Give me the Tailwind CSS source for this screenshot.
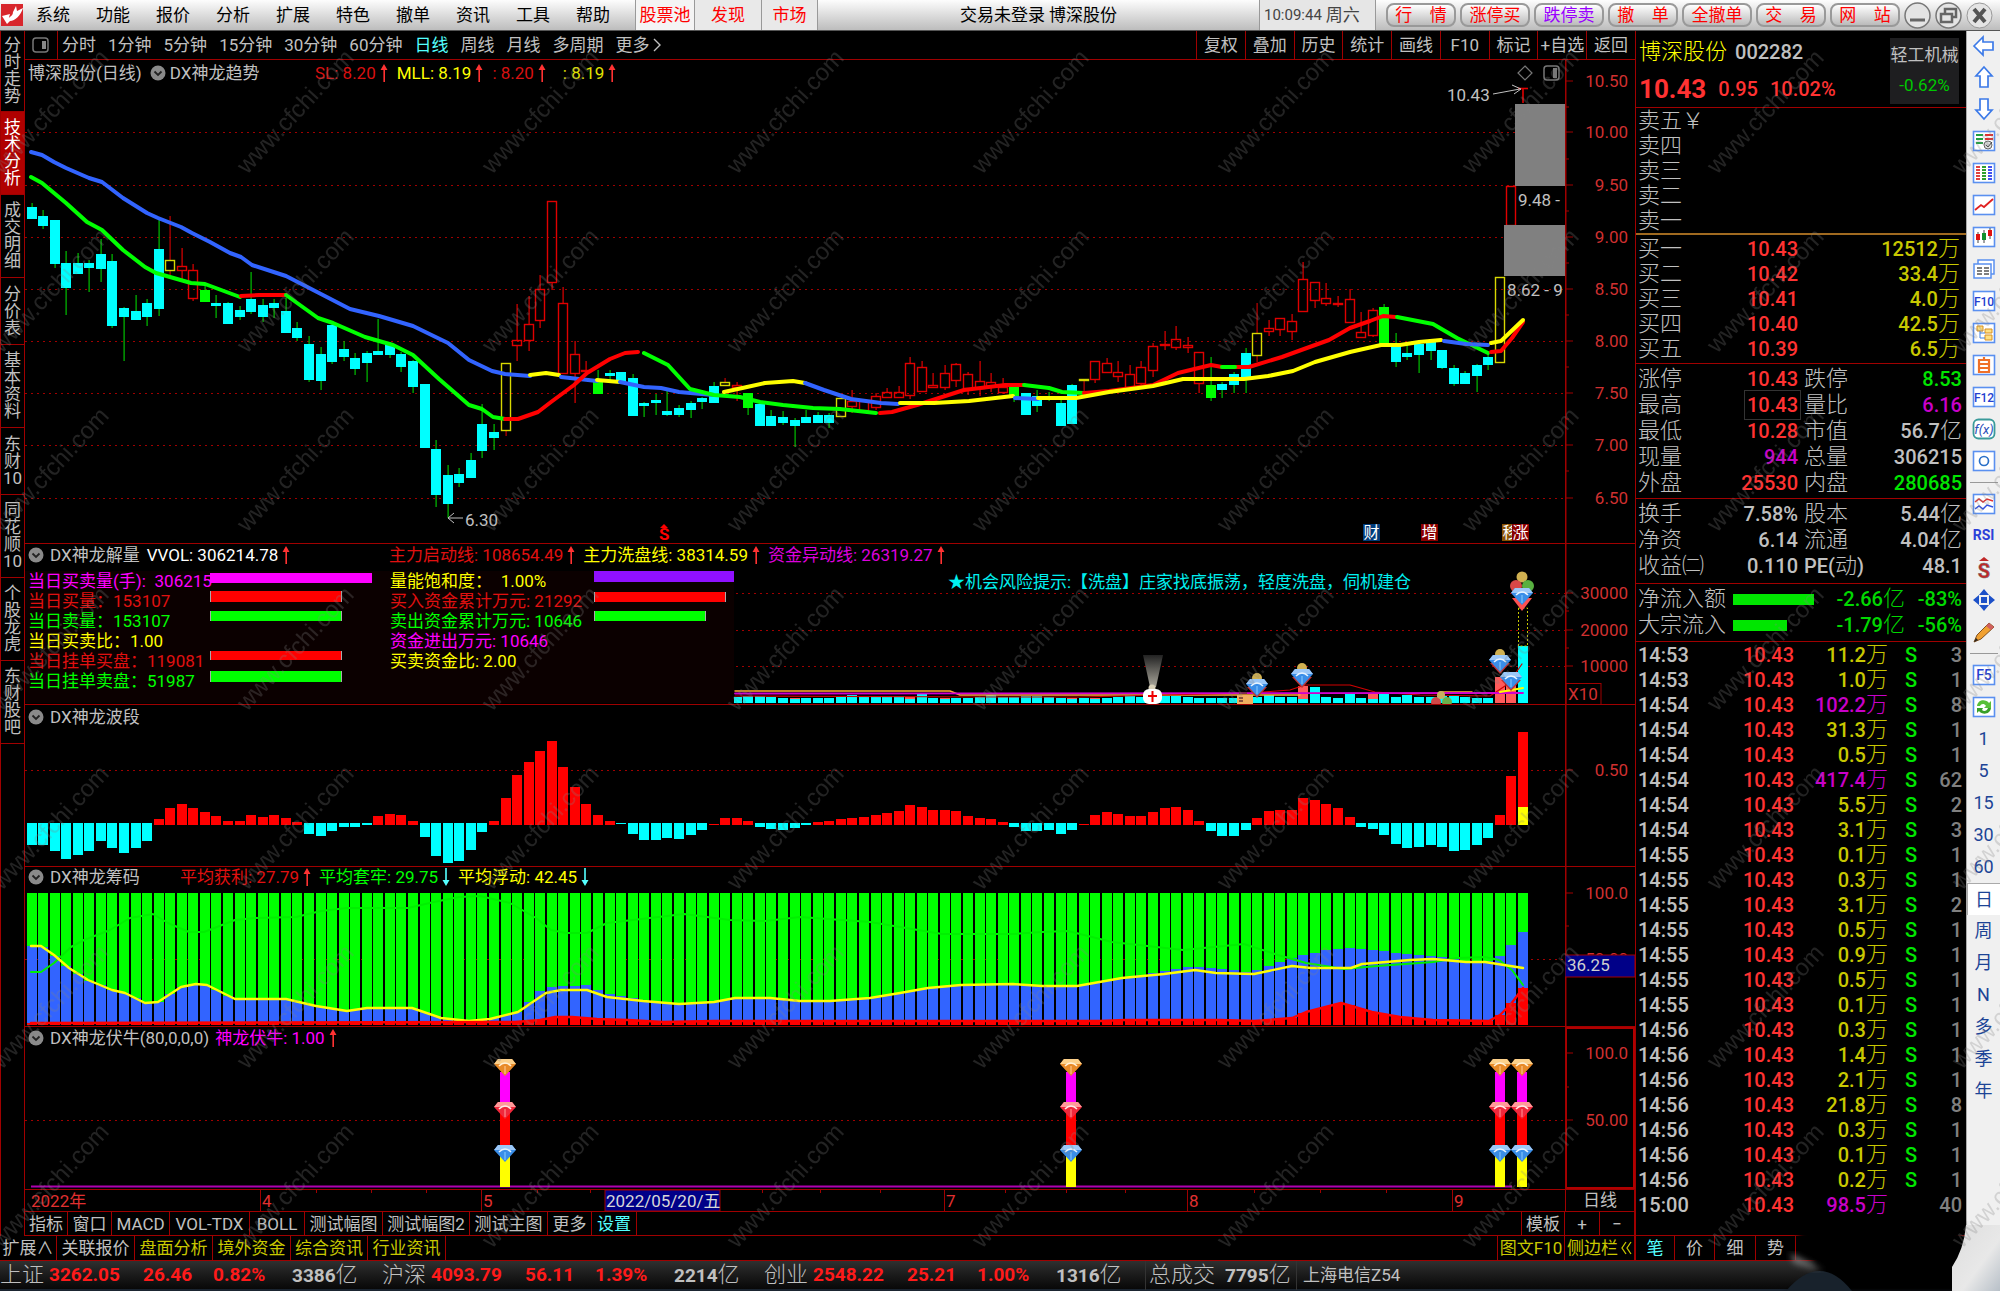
<!DOCTYPE html>
<html lang="zh-CN">
<head>
<meta charset="utf-8">
<title>交易未登录 博深股份</title>
<script src="https://cdn.jsdelivr.net/npm/@tailwindcss/browser@4"></script>
</head>
<body class="relative overflow-x-hidden bg-black font-['Roboto','Noto_Sans_CJK_SC',sans-serif] text-[17px] leading-5 text-[#c0c0c0]">

<svg class="absolute h-0 w-0" aria-hidden="true">
  <defs>
    <symbol id="chev" viewBox="0 0 16 16"><circle cx="8" cy="8" r="7.5" fill="#8a8a8a"/><path d="M4.5 6.5 8 10l3.5-3.5" fill="none" stroke="#222" stroke-width="1.8"/></symbol>
    <symbol id="up" viewBox="0 0 8 18"><path d="M4 0 7.500 6H5v12H3.400V6H.5z" fill="#ff3232"/></symbol>
    <symbol id="down" viewBox="0 0 8 18"><path d="M4 18 .5 12H3.200V0H4.800v12H7.500z" fill="#54ffff"/></symbol>
    <symbol id="gemB" viewBox="0 0 22 17"><path d="M4 0h14l4 5-11 12L0 5z" fill="#3a8ee8"/><path d="M4 0h14l4 5H0z" fill="#9cc8f8"/><path d="M5 7Q11 1 17 7" fill="none" stroke="#e8f4ff" stroke-width="1.600"/><path d="M11 7v8" stroke="#8cf" /></symbol>
    <symbol id="gemR" viewBox="0 0 22 17"><path d="M4 0h14l4 5-11 12L0 5z" fill="#f0283c"/><path d="M4 0h14l4 5H0z" fill="#ff9a9a"/><path d="M5 7Q11 1 17 7" fill="none" stroke="#ffe8e8" stroke-width="1.600"/><path d="M11 7v8" stroke="#f99"/></symbol>
    <symbol id="gemO" viewBox="0 0 22 17"><path d="M4 0h14l4 5-11 12L0 5z" fill="#e88a28"/><path d="M4 0h14l4 5H0z" fill="#fcd08a"/><path d="M5 7Q11 1 17 7" fill="none" stroke="#fff0d8" stroke-width="1.600"/><path d="M11 7v8" stroke="#fc9"/></symbol>
    <linearGradient id="beam" x1="0" y1="0" x2="0" y2="1"><stop offset="0" stop-color="#222"/><stop offset="1" stop-color="#aaa79c"/></linearGradient>
    <pattern id="wm" width="245" height="179" patternUnits="userSpaceOnUse" patternTransform="translate(229 0)">
      <text transform="translate(18 175) rotate(-47)" font-family="Liberation Sans" font-size="24" fill="#808080" fill-opacity=".27">www.cfchi.com</text>
    </pattern>
  </defs>
</svg>

<header class="flex h-[31px] items-center border-b border-[#555] bg-linear-to-b from-[#fdfdfd] to-[#bdbdbd] text-black">
  <svg class="h-[22px] w-6 shrink-0" viewBox="0 0 24 22" aria-label="logo"><rect x="1" width="22" height="22" fill="#d8262c"/><path d="M2 12l8-2-3 10zM7 20c-1-8 6-6 6-12l3-6 1 5 6-3c-2 7-8 13-13 13z" fill="#fff"/></svg>
  <nav class="flex pl-[12px]">
    <button class="w-[60px] text-left">系统</button><button class="w-[60px] text-left">功能</button><button class="w-[60px] text-left">报价</button><button class="w-[60px] text-left">分析</button><button class="w-[60px] text-left">扩展</button><button class="w-[60px] text-left">特色</button><button class="w-[60px] text-left">撤单</button><button class="w-[60px] text-left">资讯</button><button class="w-[60px] text-left">工具</button><button class="w-[59px] text-left">帮助</button>
  </nav>
  <div class="flex h-[30px] text-[#f00]">
    <button class="w-[60px] border-x border-[#999] bg-[#f4f4f4]">股票池</button>
    <button class="w-[67px] border-r border-[#999] bg-[#e9e9e9]">发现</button>
    <button class="w-[56px] border-r border-[#999] bg-[#e9e9e9]">市场</button>
  </div>
  <div class="flex-1 text-center">交易未登录 博深股份</div>
  <div class="flex h-[30px] w-[117px] items-center gap-1 border-x border-[#999] bg-[#e6e6e6] pl-1 text-[#444]"><span class="text-[15px]">10:09:44</span><span>周六</span></div>
  <div class="flex gap-1 pl-[10px] text-[#f00]">
    <button class="h-6 w-[70px] rounded-lg border-2 border-[#999] bg-linear-to-b from-white to-[#bbb] leading-4">行&emsp;情</button>
    <button class="h-6 w-[70px] rounded-lg border-2 border-[#999] bg-linear-to-b from-white to-[#bbb] leading-4">涨停买</button>
    <button class="h-6 w-[70px] rounded-lg border-2 border-[#999] bg-linear-to-b from-white to-[#bbb] leading-4 text-[#90f]">跌停卖</button>
    <button class="h-6 w-[70px] rounded-lg border-2 border-[#999] bg-linear-to-b from-white to-[#bbb] leading-4">撤&emsp;单</button>
    <button class="h-6 w-[70px] rounded-lg border-2 border-[#999] bg-linear-to-b from-white to-[#bbb] leading-4">全撤单</button>
    <button class="h-6 w-[70px] rounded-lg border-2 border-[#999] bg-linear-to-b from-white to-[#bbb] leading-4">交&emsp;易</button>
    <button class="h-6 w-[70px] rounded-lg border-2 border-[#999] bg-linear-to-b from-white to-[#bbb] leading-4">网&emsp;站</button>
  </div>
  <div class="flex gap-1 pr-[7px] pl-1">
    <button aria-label="最小化"><svg width="27" height="27" viewBox="0 0 27 27"><circle cx="13.5" cy="13.5" r="12.500" fill="#e4e4e4" stroke="#777" stroke-width="1.5"/><path d="M6 18h15" stroke="#666" stroke-width="3"/></svg></button>
    <button aria-label="还原"><svg width="27" height="27" viewBox="0 0 27 27"><circle cx="13.5" cy="13.5" r="12.500" fill="#e4e4e4" stroke="#777" stroke-width="1.5"/><path d="M10 11V7h11v8h-4M6 12h11v8H6z" fill="none" stroke="#666" stroke-width="2.500"/></svg></button>
    <button aria-label="关闭"><svg width="27" height="27" viewBox="0 0 27 27"><circle cx="13.5" cy="13.5" r="12.500" fill="#e4e4e4" stroke="#999" stroke-width="1"/><path d="M8 7l11 13M19 7L8 20" stroke="#555" stroke-width="4"/></svg></button>
  </div>
</header>

<main class="flex">
  <div class="flex min-w-0 flex-1 flex-col">
    <div class="flex flex-1">
      <nav class="flex w-[25px] flex-col border-x border-[#a00000] leading-[17px] [&>button]:w-full [&>button]:border-b [&>button]:border-[#a00000] [&>button]:px-px [&>button]:break-all">
        <button class="h-[81px]">分时走势</button>
        <button class="h-[83px] bg-[#b00000] text-white">技术分析</button>
        <button class="h-[83px]">成交明细</button>
        <button class="h-[67px]">分价表</button>
        <button class="h-[83px]">基本资料</button>
        <button class="h-[67px]">东财10</button>
        <button class="h-[83px]">同花顺10</button>
        <button class="h-[83px]">个股龙虎</button>
        <button class="h-[83px]">东财股吧</button>
      </nav>
      <div class="min-w-0 flex-1">
        <div class="flex h-[29px] items-center border-b border-[#a00000]">
          <button aria-label="侧栏" class="flex h-full w-[33px] items-center justify-center border-r border-[#a00000]"><svg width="18" height="16" viewBox="0 0 18 16"><rect x="1" y="1" width="15" height="14" rx="3" fill="none" stroke="#777" stroke-width="1.500"/><path d="M10 4h4v8h-4z" fill="#888"/></svg></button>
          <div class="flex gap-3 pl-1 whitespace-nowrap">
            <button>分时</button><button>1分钟</button><button>5分钟</button><button>15分钟</button><button>30分钟</button><button>60分钟</button><button class="text-[#54ffff]">日线</button><button>周线</button><button>月线</button><button>多周期</button>
            <button class="flex items-center gap-1">更多<svg width="9" height="14" viewBox="0 0 9 14"><path d="M1 1l6 6-6 6" fill="none" stroke="#c0c0c0" stroke-width="1.400"/></svg></button>
          </div>
          <div class="ml-auto grid h-full w-[439px] grid-cols-9 whitespace-nowrap [&>button]:border-l [&>button]:border-[#a00000]">
            <button>复权</button><button>叠加</button><button>历史</button><button>统计</button><button>画线</button><button>F10</button><button>标记</button><button>+自选</button><button>返回</button>
          </div>
        </div>

        <section class="flex h-[484px] border-b border-[#a00000]">
          <div class="relative min-w-0 flex-1">
            <svg id="kline" class="absolute inset-0 h-full w-full" viewBox="25 60 1540 483" preserveAspectRatio="none"></svg>
            <div class="relative flex items-center pt-[3px] pl-[3px] whitespace-nowrap">
              <div class="flex w-[287px] items-center gap-2"><span>博深股份(日线)</span><span class="flex items-center gap-1"><svg width="16" height="16"><use href="#chev"/></svg>DX神龙趋势</span></div>
              <div class="flex gap-[9px]">
                <span class="flex items-center gap-1 text-[#d81010]">SL: 8.20<svg width="8" height="18"><use href="#up"/></svg></span>
                <span class="flex items-center gap-1 text-[#ff0]">MLL: 8.19<svg width="8" height="18"><use href="#up"/></svg></span>
                <span class="flex items-center gap-1 text-[#d81010]">: 8.20<svg width="8" height="18"><use href="#up"/></svg></span>
                <span class="flex items-center gap-1 pl-2 text-[#e0e000]">: 8.19<svg width="8" height="18"><use href="#up"/></svg></span>
              </div>
            </div>
          </div>
          <svg id="ax1" class="h-[484px] w-[70px]" viewBox="1565 60 70 484"></svg>
        </section>

        <section class="flex h-[161px] border-b border-[#a00000]">
          <div class="relative min-w-0 flex-1">
            <svg id="vol" class="absolute inset-0 h-full w-full" viewBox="25 544 1540 160" preserveAspectRatio="none"></svg>
            <div class="relative flex items-center pt-px pl-[3px] whitespace-nowrap">
              <div class="flex w-[361px] items-center gap-[7px]"><span class="flex items-center gap-[6px]"><svg width="16" height="16"><use href="#chev"/></svg>DX神龙解量</span><span class="flex items-center gap-1 text-white">VVOL: 306214.78<svg width="8" height="18"><use href="#up"/></svg></span></div>
              <div class="flex gap-2">
                <span class="flex items-center gap-1 text-[#e01010]">主力启动线: 108654.49<svg width="8" height="18"><use href="#up"/></svg></span>
                <span class="flex items-center gap-1 text-[#ff0]">主力洗盘线: 38314.59<svg width="8" height="18"><use href="#up"/></svg></span>
                <span class="flex items-center gap-1 text-[#d0d]">资金异动线: 26319.27<svg width="8" height="18"><use href="#up"/></svg></span>
              </div>
            </div>
            <div class="relative mt-[6px] flex h-[132px] items-start whitespace-nowrap">
              <div class="grid h-full w-[709px] grid-cols-[182px_180px_204px_1fr] content-start bg-[#0b0000] pl-[3px] auto-rows-[20px]">
                <span class="text-[#f0f]">当日买卖量(手):&ensp;306215</span><i class="z-10 mt-[2px] h-[10px] w-[162px] bg-[#f0f]"></i><span class="text-[#ff0]">量能饱和度：&ensp;1.00%</span><i class="h-[11px] bg-[#9010ff]"></i>
                <span class="text-[#e01010]">当日买量：153107</span><i class="h-[11px] w-[132px] border-x border-[#aaa] bg-[#f00]"></i><span class="text-[#e01010]">买入资金累计万元: 21292</span><i class="mt-px h-[10px] w-[132px] border-x border-[#aaa] bg-[#f00]"></i>
                <span class="text-[#0f0]">当日卖量：153107</span><i class="h-[10px] w-[132px] border-x border-[#aaa] bg-[#0f0]"></i><span class="text-[#0f0]">卖出资金累计万元: 10646</span><i class="h-[10px] w-[112px] border-x border-[#aaa] bg-[#0f0]"></i>
                <span class="text-[#ff0]">当日买卖比：1.00</span><i></i><span class="text-[#f0f]">资金进出万元: 10646</span><i></i>
                <span class="text-[#e01010]">当日挂单买盘：119081</span><i class="h-[9px] w-[132px] border-x border-[#aaa] bg-[#f00]"></i><span class="text-[#ff0]">买卖资金比: 2.00</span><i></i>
                <span class="text-[#0f0]">当日挂单卖盘：51987</span><i class="h-[11px] w-[132px] border-x border-[#aaa] bg-[#0f0]"></i>
              </div>
              <p class="pt-px pl-[214px] text-[#00f0f0]">★机会风险提示:【洗盘】庄家找底振荡，轻度洗盘，伺机建仓</p>
            </div>
          </div>
          <svg id="ax2" class="h-[160px] w-[70px]" viewBox="1565 544 70 160"></svg>
        </section>

        <section class="flex h-[162px] border-b border-[#a00000]">
          <div class="relative min-w-0 flex-1">
            <svg id="wave" class="absolute inset-0 h-full w-full" viewBox="25 705 1540 161" preserveAspectRatio="none"></svg>
            <div class="relative flex items-center gap-[6px] pt-[2px] pl-[3px]"><svg width="16" height="16"><use href="#chev"/></svg>DX神龙波段</div>
          </div>
          <svg id="ax3" class="h-[161px] w-[70px]" viewBox="1565 705 70 161"></svg>
        </section>

        <section class="flex h-[160px] border-b border-[#a00000]">
          <div class="relative min-w-0 flex-1">
            <svg id="chip" class="absolute inset-0 h-full w-full" viewBox="25 867 1540 159" preserveAspectRatio="none"></svg>
            <div class="relative flex items-center pl-[3px] whitespace-nowrap">
              <div class="flex w-[152px] items-center gap-[6px]"><svg width="16" height="16"><use href="#chev"/></svg>DX神龙筹码</div>
              <div class="flex gap-2">
                <span class="flex items-center gap-1 text-[#e01010]">平均获利: 27.79<svg width="8" height="18"><use href="#up"/></svg></span>
                <span class="flex items-center gap-1 text-[#0f0]">平均套牢: 29.75<svg width="8" height="18"><use href="#down"/></svg></span>
                <span class="flex items-center gap-1 text-[#ff0]">平均浮动: 42.45<svg width="8" height="18"><use href="#down"/></svg></span>
              </div>
            </div>
          </div>
          <svg id="ax4" class="h-[159px] w-[70px]" viewBox="1565 867 70 159"></svg>
        </section>

        <section class="flex h-[163px] border-b border-[#a00000]">
          <div class="relative min-w-0 flex-1">
            <svg id="bull" class="absolute inset-0 h-full w-full" viewBox="25 1027 1540 162" preserveAspectRatio="none"></svg>
            <div class="relative flex items-center gap-[6px] pt-px pl-[3px] whitespace-nowrap"><svg width="16" height="16"><use href="#chev"/></svg>DX神龙伏牛(80,0,0,0)<span class="flex items-center gap-1 text-[#f0f]">神龙伏牛: 1.00<svg width="8" height="18"><use href="#up"/></svg></span></div>
          </div>
          <svg id="ax5" class="h-[162px] w-[70px]" viewBox="1565 1027 70 162"></svg>
        </section>

        <div class="flex h-[22px] border-b border-[#a00000]">
          <svg id="dates" class="h-[21px] min-w-0 flex-1" viewBox="25 1190 1540 21" preserveAspectRatio="none"></svg>
          <div class="w-[70px] border-x border-[#a00000] text-center">日线</div>
        </div>
        <div class="flex h-6 border-b border-[#a00000] whitespace-nowrap [&>button]:border-r [&>button]:border-[#a00000]">
          <button class="w-[43px]">指标</button><button class="w-[44px]">窗口</button><button class="w-[58px]">MACD</button><button class="w-20">VOL-TDX</button><button class="w-[55px]">BOLL</button><button class="w-[78px]">测试幅图</button><button class="w-[87px]">测试幅图2</button><button class="w-[78px]">测试主图</button><button class="w-11">更多</button><button class="w-[45px] text-[#54ffff]">设置</button>
          <span class="flex-1 border-r border-[#a00000]"></span>
          <button class="w-[43px]">模板</button><button class="w-[35px]">+</button><button class="w-[35px]">−</button>
        </div>
      </div>
    </div>
    <div class="flex h-[25px] border-b border-[#a00000] whitespace-nowrap text-[#c8c800] [&>button]:border-r [&>button]:border-[#a00000]">
      <button class="w-[57px] text-[#c0c0c0]">扩展∧</button><button class="w-[78px] text-[#c0c0c0]">关联报价</button><button class="w-[78px]">盘面分析</button><button class="w-[78px]">境外资金</button><button class="w-[77px]">综合资讯</button><button class="w-[78px]">行业资讯</button>
      <span class="flex-1 border-r border-[#a00000]"></span>
      <button class="w-[67px]">图文F10</button><button class="flex w-[70px] items-center justify-center gap-[2px]">侧边栏<svg width="12" height="14" viewBox="0 0 12 14"><path d="M6 1 2 7l4 6M11 1 7 7l4 6" fill="none" stroke="#c8c800" stroke-width="1.300"/></svg></button>
    </div>
  </div>

  <aside class="flex w-[365px]">
    <div class="flex w-[331px] flex-col border-l border-[#a00000]">
      <div class="flex h-[77px] justify-between border-b border-[#a00000] pt-[7px] pl-[3px] pr-[7px] text-xl font-medium">
        <div>
          <h1 class="flex h-7 items-center gap-2"><span class="text-[22px] font-light text-[#ff0]">博深股份</span>002282</h1>
          <p class="mt-[7px] flex items-center gap-3 text-[#ff3232]"><b class="text-[26px] leading-8">10.43</b><span>0.95</span><span>10.02%</span></p>
        </div>
        <div class="flex h-[66px] w-[69px] flex-col items-center justify-between bg-[#1e1e20] py-[6px] text-[17px] font-normal"><span>轻工机械</span><span class="text-[#00c800]">-0.62%</span></div>
      </div>
      <table class="w-full text-[22px] font-light [&_td]:p-0 [&_tr]:h-[25px]"><tbody id="asks"></tbody></table>
      <table class="w-full border-separate border-spacing-0 border-t-2 border-[#a06a20] pt-px text-[22px] font-light [&_td]:p-0 [&_tr]:h-[25px]"><tbody id="bids"></tbody></table>
      <table class="mt-[2px] w-full border-separate border-spacing-0 border-t border-[#a00000] pt-[2px] text-[22px] font-light [&_td]:p-0 [&_tr]:h-[26px]"><tbody id="q1"></tbody></table>
      <table class="mt-[2px] w-full border-separate border-spacing-0 border-t border-[#a00000] pt-[2px] text-[22px] font-light [&_td]:p-0 [&_tr]:h-[26px]"><tbody id="q2"></tbody></table>
      <div class="mt-1 border-t border-[#a00000] pt-[2px] text-[22px] font-light leading-[26px]">
        <div class="flex h-[26px] items-center pl-[2px] pr-1"><span class="w-[95px]">净流入额</span><i class="h-[11px] w-[81px] bg-[#00e600]"></i><span class="ml-auto text-[#00d800]"><b class="text-xl leading-none font-medium">-2.66</b>亿</span><b class="w-[57px] text-right text-xl leading-none font-medium text-[#00d800]">-83%</b></div>
        <div class="flex h-[26px] items-center pl-[2px] pr-1"><span class="w-[95px]">大宗流入</span><i class="h-[11px] w-[54px] bg-[#00e600]"></i><span class="ml-auto text-[#00d800]"><b class="text-xl leading-none font-medium">-1.79</b>亿</span><b class="w-[57px] text-right text-xl leading-none font-medium text-[#00d800]">-56%</b></div>
      </div>
      <table class="mt-[3px] w-full table-fixed border-separate border-spacing-0 border-t border-[#a00000] pt-px text-xl font-medium leading-[25px] [&_td]:p-0 [&_tr]:h-[25px]"><colgroup><col class="w-[56px]"><col class="w-[102px]"><col class="w-[94px]"><col class="w-[46px]"><col></colgroup><tbody id="ticks"></tbody></table>
      <div class="mt-auto grid h-[26px] grid-cols-[39px_40px_41px_40px] border-y border-[#a00000] [&>button]:border-r [&>button]:border-[#a00000]">
        <button class="text-[#54ffff]">笔</button><button>价</button><button>细</button><button>势</button>
      </div>
    </div>
    <nav id="tools" class="flex w-[34px] flex-col items-center border-l border-[#aaa] bg-[#f0f0f0] text-lg text-[#1c4496]"></nav>
  </aside>
</main>

<footer class="flex h-[30px] items-center border-b-2 border-[#1a2430] bg-linear-to-b from-[#303030] to-[#080808] text-[22px] font-light leading-7 whitespace-nowrap [&_b]:text-[19px] [&_b]:font-bold">
  <div class="grid w-[382px] grid-cols-[49px_94px_70px_79px_90px]"><span>上证</span><b class="text-[#ff1a1a]">3262.05</b><b class="text-[#ff1a1a]">26.46</b><b class="text-[#ff1a1a]">0.82%</b><span><b>3386</b>亿</span></div>
  <div class="grid w-[382px] grid-cols-[49px_94px_70px_79px_90px]"><span>沪深</span><b class="text-[#ff1a1a]">4093.79</b><b class="text-[#ff1a1a]">56.11</b><b class="text-[#ff1a1a]">1.39%</b><span><b>2214</b>亿</span></div>
  <div class="grid w-[382px] grid-cols-[49px_94px_70px_79px_90px] border-r border-[#333]"><span>创业</span><b class="text-[#ff1a1a]">2548.22</b><b class="text-[#ff1a1a]">25.21</b><b class="text-[#ff1a1a]">1.00%</b><span><b>1316</b>亿</span></div>
  <div class="flex w-[151px] gap-[10px] border-r border-[#333] pl-[3px]"><span>总成交</span><span><b>7795</b>亿</span></div>
  <span class="pl-[6px] text-[17px] font-normal">上海电信Z54</span>
</footer>

<svg class="pointer-events-none absolute right-0 bottom-0 h-[70px] w-[224px]" viewBox="0 0 224 70" aria-hidden="true">
  <defs><filter id="soft"><feGaussianBlur stdDeviation="3"/></filter><linearGradient id="lt" x1="0" y1="0" x2="1" y2="1"><stop offset="0" stop-color="#ddd"/><stop offset=".6" stop-color="#e8e8e8"/><stop offset="1" stop-color="#b8c0c8"/></linearGradient></defs>
  <path d="M22 0H186V72H6L44 62Q34 30 22 14z" fill="#050505" filter="url(#soft)"/>
  <path d="M10 70Q44 30 76 70z" fill="#18222c"/>
  <path d="M14 32l34 18-30-8z" fill="#777" filter="url(#soft)"/>
  <path d="M190 4H224V70H176V46Q188 28 190 4z" fill="url(#lt)"/>
</svg>
<svg class="pointer-events-none absolute inset-x-0 top-[31px] h-[1260px] w-full" aria-hidden="true"><g transform="translate(0 -31)"><rect y="31" width="100%" height="1260" fill="url(#wm)"/></g></svg>

<script>
const P = 11.562, X0 = 31.5, X = i => X0 + P * i;
const el = id => document.getElementById(id);
const rect = (x, y, w, h, f, extra = '') => `<rect x="${x}" y="${y}" width="${w}" height="${h}" fill="${f}" ${extra}/>`;
const line = (x1, y1, x2, y2, s, w = 1, extra = '') => `<path d="M${x1} ${y1}L${x2} ${y2}" stroke="${s}" stroke-width="${w}" ${extra}/>`;
const poly = (pts, s, w) => `<polyline points="${pts}" fill="none" stroke="${s}" stroke-width="${w}" stroke-linejoin="round" stroke-linecap="round"/>`;
const dots = (y, x = 25) => line(x, y, 1565, y, '#a00000', 1, 'stroke-dasharray="2 4"');
const text = (x, y, t, f, extra = '') => `<text x="${x}" y="${y}" fill="${f}" font-size="17" ${extra}>${t}</text>`;

// Daily candles: high, body top, body bottom, low, kind
const K = `203,207,218,218,c 210,216,225,229,c 220,220,263,268,c 251,263,287,315,c 253,263,273,273,c 260,263,267,292,c 239,254,268,282,c 254,261,325,328,c 307,308,316,361,c 295,311,319,319,c 299,303,316,326,c 220,249,308,316,c 216,260,270,275,y 248,266,270,280,r 264,270,298,301,r 285,290,301,301,g 295,303,305,318,c 302,303,323,323,c 306,310,316,320,c 272,299,311,314,c 299,305,316,322,c 299,303,307,318,c 298,311,332,332,c 322,328,337,341,c 336,344,379,382,c 347,354,380,390,c 323,325,361,364,c 341,349,356,361,c 353,358,368,375,c 351,353,362,382,c 319,351,354,355,c 342,344,354,358,c 352,354,366,372,c 360,361,386,393,c 384,384,447,447,c 440,449,494,507,c 465,475,503,518,c 468,474,482,487,c 453,460,477,477,c 404,424,450,458,c 424,432,437,450,c
363,363,430,436,y 304,340,345,361,r 296,324,340,351,r 275,289,320,328,r 201,201,282,290,r 287,303,373,373,r 341,354,373,403,r 361,370,371,374,r 370,380,393,393,g 370,373,375,380,c 372,372,382,382,c 374,378,415,415,c 402,403,405,417,c 394,400,402,415,c 389,411,414,416,c 405,408,414,417,c 401,403,409,418,c 397,398,401,409,c 382,386,402,402,c 378,382,385,385,y 382,385,387,401,r 393,393,407,415,g 404,404,425,425,c 410,416,425,425,c 411,417,422,425,c 418,420,425,447,c 410,417,422,422,c 412,415,422,422,c 413,415,422,428,c 398,398,416,416,y 390,401,406,413,r 401,401,410,410,r 393,396,407,410,r 388,392,397,398,r 386,392,397,397,r 357,363,395,399,r 361,367,391,391,r 373,385,387,388,r 365,373,387,390,r 363,364,380,387,r 372,374,388,395,r 361,381,388,396,r 373,382,386,392,r 378,387,392,394,r 387,387,396,402,g 393,393,414,414,c 390,396,405,412,c 392,397,398,401,c 398,403,425,425,c 384,385,423,423,c 379,379,380,393,y 361,361,379,383,r 358,363,372,372,r 361,372,376,382,r 365,374,388,388,r 361,367,383,389,r 343,346,370,377,r 331,344,345,350,r 326,339,347,350,r 337,345,347,353,r 352,352,383,393,r 357,385,397,401,g 382,384,389,398,c 372,374,384,393,c 348,353,378,393,c 303,333,355,362,y 320,328,331,336,r 318,318,329,336,r 314,321,331,340,r 262,279,311,311,r 282,282,300,308,r 283,298,303,306,r 296,303,304,307,r 289,299,322,323,r 312,332,337,337,r 308,310,335,337,r 304,307,345,345,g 333,345,361,367,c 343,353,356,360,c 343,344,354,373,c 340,342,350,360,c 350,350,367,369,c 365,368,383,386,c 371,373,383,383,c 364,365,375,392,c 353,357,364,370,c 277,277,362,362,y 186,186,225,225,r`.trim().split(/\s+/);
let s = [132, 185, 237, 289, 341, 393, 445, 498].map(y => dots(y + .5)).join('');
K.forEach((k, i) => {
  const [h, t, b, l, c] = k.split(','), x = Math.round(X(i)), H = Math.max(b - t, 1);
  if (c === 'c' || c === 'g') s += rect(x - .5, h, 1.2, l - h, '#00c000') + rect(x - 5, t, 10, H + 1, c === 'c' ? '#00ffff' : '#00ff00');
  else { const col = c === 'r' ? '#e00000' : '#d8d800', w = c === 'r' ? '#e00000' : '#c00000';
    s += rect(x - .5, h, 1.2, Math.max(t - h, 0), w) + rect(x - .5, b, 1.2, Math.max(l - b, 0), w) + rect(x - 4.5, +t + .5, 9, H, 'none', `stroke="${col}" stroke-width="1.4"`); }
});
[['#3264ff', '31,152 42,155 54,162 66,168 89,178 102,182 123,198 147,213 158,218 181,227 192,233 210,242 230,253 241,257 252,265 286,276 319,293 350,309 379,316 413,326 448,343 469,360 492,371 505,374 530,376'],
 ['#ffff00', '530,375 546,373 559,375'], ['#3264ff', '561,377 597,381'], ['#ffff00', '597,380 620,382'],
 ['#3264ff', '620,382 644,387 661,388 679,392 713,395'], ['#00ff00', '31,177 42,183 54,193 66,203 87,222 102,230 123,250 145,267 156,273 191,283 205,284 240,297'],
 ['#ff0000', '241,296 259,295 286,295'], ['#00ff00', '286,295 318,318 333,323 365,337 393,345 413,355 439,379 469,405 482,409 493,417 505,419'],
 ['#ff0000', '505,419 518,419 538,412 551,402 574,385 587,373 610,359 625,353 638,352'],
 ['#00ff00', '644,353 668,365 690,389 714,395 740,397 760,402 783,405 813,408 840,409 876,413'],
 ['#ffff00', '724,392 747,387 765,383 793,381 805,383'], ['#3264ff', '805,383 824,390 851,399 881,403 898,404'],
 ['#ff0000', '880,413 892,412 917,405 939,398 964,390 1005,385 1024,385'], ['#00ff00', '1024,385 1049,388 1062,392 1084,393'],
 ['#ff0000', '1084,393 1109,391 1153,385 1178,373 1211,365 1222,367'], ['#ff0000', '1235,367 1249,367 1282,357 1304,349 1329,340 1350,328 1370,321 1383,316 1395,317'], ['#00ff00', '1222,367 1235,367'],
 ['#ffff00', '900,403 934,403 969,401 1013,396'], ['#3264ff', '1015,398 1038,399'],
 ['#ffff00', '1038,398 1076,398 1109,392 1153,386 1183,379 1244,379 1268,376 1293,371 1315,362 1350,352 1381,345 1400,345 1419,342 1441,340'],
 ['#00ff00', '1397,317 1433,324 1457,338 1488,353'], ['#3264ff', '1444,341 1466,344 1488,345'],
 ['#ff0000', '1491,352 1501,351 1512,338 1523,322'], ['#ffff00', '1491,343 1501,341 1523,320']].forEach(([c, p]) => s += poly(p, c, 4));
s += rect(1515, 104, 50, 82, '#808080') + rect(1504, 225, 61, 51, '#808080');
s += line(1518, 88.5, 1528, 88.5, '#e00000', 1.6) + line(1523, 88, 1523, 103, '#e00000', 1.6);
s += text(1447, 101, '10.43', '#c0c0c0') + line(1493, 94, 1520, 89, '#c0c0c0') + line(1512, 85, 1521, 89, '#c0c0c0') + line(1514, 94, 1521, 89, '#c0c0c0');
s += text(1518, 206, '9.48 -', '#c0c0c0') + text(1507, 296, '8.62 - 9', '#c0c0c0');
s += text(465, 526, '6.30', '#c0c0c0') + line(448, 518, 463, 518, '#c0c0c0') + line(448, 518, 454, 513, '#c0c0c0') + line(448, 518, 454, 523, '#c0c0c0');
s += text(659, 540, 'S', '#f00', 'font-weight="bold"') + '<path d="M664 524l4 4h-8z" fill="#f00"/>';
s += '<path d="M1525 66l7 7-7 7-7-7z" fill="none" stroke="#777" stroke-width="1.2"/><rect x="1544" y="66" width="15" height="14" rx="3" fill="none" stroke="#777" stroke-width="1.5"/><path d="M1553 68h4v10h-4z" fill="#777"/>';
[[1363, '财', '#003a78'], [1421, '增', '#8b0000'], [1502, '移', '#8a5000'], [1512, '涨', '#8b0000']].forEach(([x, t, f]) => s += rect(x, 524, 17, 17, f) + text(x + .5, 538, t, '#fff', 'style="font-size:16px"'));
el('kline').innerHTML = s;

// Axis columns
const axis = (top, h, major, minor) => line(1565.5, top, 1565.5, top + h, '#a00000', 2)
  + major.map(([y, t]) => line(1565, y, 1573, y, '#a00000') + `<text x="1628" y="${y + 6}" text-anchor="end" fill="#d03030" font-size="17">${t}</text>`).join('')
  + minor.map(y => line(1565, y, 1569, y, '#a00000')).join('');
el('ax1').innerHTML = axis(60, 484, [[81, '10.50'], [132, '10.00'], [185, '9.50'], [237, '9.00'], [289, '8.50'], [341, '8.00'], [393, '7.50'], [445, '7.00'], [498, '6.50']], [107, 159, 211, 263, 315, 367, 419, 471]);
el('ax2').innerHTML = axis(544, 160, [[593, '30000'], [630, '20000'], [666, '10000']], [611, 648]) + '<rect x="1566" y="683.5" width="35" height="22" fill="none" stroke="#a00000"/>' + text(1568, 700, 'X10', '#d03030');
el('ax3').innerHTML = axis(705, 161, [[770, '0.50']], []);
el('ax4').innerHTML = axis(867, 159, [[893, '100.0'], [959, '50.00']], [926]) + '<rect x="1565" y="955" width="70" height="22" fill="#000088" stroke="#a00000"/>' + text(1567, 971, '36.25', '#d0d0d0');
el('ax5').innerHTML = '<rect x="1566" y="1028" width="68" height="160" fill="none" stroke="#b00000" stroke-width="2"/>' + axis(1027, 162, [[1053, '100.0'], [1120, '50.00']], [1087]);

// Volume
s = dots(593.5, 736) + dots(630.5, 736) + dots(666.5, 736);
const red = new Set([66, 76, 79, 90, 92, 110, 116, 127, 128]);
for (let i = 61; i < 129; i++) {
  let h = [6, 5, 7, 5, 6, 8, 5, 6, 5, 7, 6, 5][(i * 7) % 12];
  h = { 110: 17, 111: 16, 116: 10, 127: 26, 128: 26, 77: 9, 114: 9, 117: 9 }[i] || h;
  const x = Math.round(X(i)) - 5;
  s += rect(x, 703 - h, 10, h, red.has(i) ? '#ff5a5a' : '#00ffff');
  if (red.has(i)) s += rect(x, 699, 10, 4, i > 126 ? '#ff5a5a' : '#00ffff');
}
s += rect(1518, 646, 10, 57, '#00ffff') + rect(1518.5, 608, 9, 38, 'none', 'stroke="#c8c800" stroke-dasharray="2 2"');
s += poly('735,691 950,691 960,695 1240,695 1300,695', '#ffb030', 1.5) + poly('1440,692 1472,692', '#ffb030', 1.5) + poly('735,696 1000,697 1080,697 1250,693 1290,690 1305,685 1350,685 1375,692 1420,695 1490,696 1508,684 1522,664', '#d00000', 1.2) + poly('735,693.5 1523,693', '#d000d0', 1.8) + poly('1500,692 1523,688', '#ff0', 2);
s += '<path d="M1143 655h20l-7 32h-6z" fill="url(#beam)"/><circle cx="1152" cy="688" r="3.5" fill="#d8d0b8"/><rect x="1143" y="689" width="19" height="15" rx="6" fill="#fff"/><path d="M1152.500 691v11M1148 696h9" stroke="#e00" stroke-width="2"/>';
s += '<rect x="1237" y="695" width="16" height="9" fill="#f0b060"/><path d="M1239 693h8M1239 698h4M1239 701h4" stroke="#633" stroke-width="1.500"/>';
s += '<circle cx="1436" cy="702" r="5" fill="#d04848"/><circle cx="1447" cy="702" r="5" fill="#6ab04c"/><circle cx="1441" cy="695" r="4" fill="#c8b060"/>';
[[1257, 679], [1302, 669], [1500, 655], [1511, 672]].forEach(([x, y]) => s += (x === 1511 ? '' : `<circle cx="${x}" cy="${y - 1}" r="5" fill="#d0b050"/>`) + `<path d="M${x - 10} ${y + 8}L${x} ${y + 19}L${x + 10} ${y + 8}" fill="#c03030"/><use href="#gemB" x="${x - 11}" y="${y}" width="22" height="17"/>`);
s += '<circle cx="1522" cy="577" r="5.500" fill="#d0b050"/><circle cx="1516" cy="586" r="6" fill="#d84848"/><circle cx="1528" cy="586" r="6" fill="#58b040"/><path d="M1512 598L1522 611L1532 598z" fill="#ff5050"/><use href="#gemB" x="1511" y="588" width="22" height="17"/>';
el('vol').innerHTML = s;

// Wave histogram, offsets from the zero line
const W = [-22,-22,-28,-36,-32,-28,-18,-25,-30,-25,-18,6,17,21,17,13,9,4,4,10,8,10,7,3,-11,-13,-8,-4,-4,-2,9,11,10,4,-14,-33,-40,-38,-27,-9,4,27,50,63,74,84,58,38,21,10,4,-1,-11,-17,-17,-15,-16,-12,-7,1,7,7,4,-4,-6,-7,-5,-2,3,4,6,7,8,10,12,14,20,18,15,15,14,9,7,6,3,-4,-8,-8,-7,-11,-7,1,10,13,11,9,9,13,17,18,15,4,-8,-13,-13,-7,7,14,15,15,27,25,21,17,8,-4,-6,-12,-21,-25,-24,-22,-24,-28,-27,-22,-15,10,49,93];
s = dots(770.5);
W.forEach((v, i) => { const x = Math.round(X(i)) - 5; s += v > 0 ? rect(x, 825 - v, 10, v, '#ff0000') : rect(x, 823, 10, -v, '#00ffff'); });
s += rect(1518, 807, 10, 18, '#ffff00');
el('wave').innerHTML = s;

// Chip distribution
const parse = t => t.split(' ').map(p => p.split(',').map(Number));
const at = (pts, x) => { if (x <= pts[0][0]) return pts[0][1]; for (let i = 1; i < pts.length; i++) if (x <= pts[i][0]) { const [a, b] = pts[i - 1], [c, d] = pts[i]; return b + (d - b) * (x - a) / (c - a); } return pts.at(-1)[1]; };
const yel = '31,946 41,946 54,955 69,968 88,980 112,990 125,993 145,1003 158,1002 181,987 196,984 207,985 235,999 286,999 316,1006 347,1011 367,1008 412,1008 441,1018 469,1021 490,1019 518,1012 546,993 561,990 587,990 607,997 643,1001 679,1004 714,1002 735,998 770,998 800,1001 830,1001 870,998 900,993 928,988 961,985 1013,984 1042,986 1077,986 1122,978 1164,974 1195,970 1216,973 1254,974 1292,966 1311,968 1351,968 1362,964 1410,960 1433,959 1466,962 1485,962 1523,968';
const grn = '31,972 41,972 54,963 71,947 84,940 110,930 130,918 153,914 168,923 189,932 204,932 235,920 255,918 296,917 321,911 347,908 408,908 434,902 459,897 480,896 510,903 536,918 551,930 566,933 587,933 607,923 684,914 730,920 765,921 800,917 870,922 900,927 942,934 1013,934 1042,932 1068,931 1112,942 1183,950 1244,944 1278,955 1306,963 1344,969 1377,966 1433,962 1457,958 1485,957 1499,960 1512,970 1523,985';
const yp = parse(yel);
const bp = parse('31,946').concat(yp.slice(1).filter(p => p[0] < 535), parse('545,987 590,985 600,991 612,995 630,997'), yp.filter(p => p[0] > 640 && p[0] < 1125), parse('1164,971 1184,967 1205,967 1250,972 1280,962 1300,956 1330,949 1355,948 1390,951 1400,954 1425,955 1447,957 1470,962 1490,961 1500,956 1511,945 1523,932'));
const rp = parse('31,1023 515,1022 540,1020 555,1017 572,1017 597,1019 628,1020 663,1022 714,1021 1100,1021 1125,1020 1220,1020 1254,1021 1292,1018 1306,1012 1341,1003 1372,1012 1400,1017 1433,1020 1489,1021 1500,1015 1511,1004 1523,988');
s = dots(959.5);
for (let i = 0; i < 130; i++) { const x = Math.round(X(i)) - 5, b = Math.round(at(bp, X(i))), r = Math.round(at(rp, X(i)));
  s += rect(x, 893, 10, b - 893, '#00ff00') + rect(x, b, 10, r - b, '#3264ff') + rect(x, r, 10, 1025 - r, '#ff0000'); }
s += poly(grn, '#00f000', 2) + poly(yel, '#ffff00', 2.4) + poly(rp.map(p => p.join()).join(' '), '#ff0000', 2.4);
el('chip').innerHTML = s;

s = dots(1120.5) + line(31, 1186.5, 1512, 1186.5, '#b000b0', 2);
[505, 1071, 1500, 1522].forEach(x => s += rect(x - 5, 1072, 10, 32, '#ff00ff') + rect(x - 5, 1112, 10, 36, '#ff0000') + rect(x - 5, 1156, 10, 31, '#ffff00')
  + `<use href="#gemO" x="${x - 11}" y="1059" width="22" height="17"/><use href="#gemR" x="${x - 11}" y="1102" width="22" height="17"/><use href="#gemB" x="${x - 11}" y="1145" width="22" height="17"/>`);
el('bull').innerHTML = s;

s = text(31, 1207, '2022年', '#e03030');
[[260, '4'], [481, '5'], [944, '7'], [1187, '8'], [1452, '9']].forEach(([x, t]) => s += line(x + .5, 1190, x + .5, 1212, '#a00000') + text(x + 2, 1207, t, '#e03030'));
[316, 371, 426, 537, 590, 762, 820, 880, 1005, 1066, 1125, 1254, 1320, 1386].forEach(x => s += line(x + .5, 1190, x + .5, 1193, '#a00000'));
s += rect(605, 1190, 115, 21, '#000088', 'stroke="#a00000"') + text(606, 1207, '2022/05/20/五', '#d8d8d8');
el('dates').innerHTML = s;

// Quote tables
const C = { r: '#ff3232', y: '#c8c800', g: '#00e600', p: '#c800c8', w: '#c0c0c0', d: '#808080' };
const num = t => t.replace(/^([^万亿]*)([万亿]?)$/, '<b class="text-xl leading-none font-medium">$1</b><span class="text-[22px] leading-none font-light">$2</span>');
el('asks').innerHTML = ['五￥', '四', '三', '二', '一'].map(t => `<tr><td class="leading-[25px]"><span class="pl-[2px]">卖${t}</span></td></tr>`).join('');
el('bids').innerHTML = [['一', '10.43', '12512万'], ['二', '10.42', '33.4万'], ['三', '10.41', '4.0万'], ['四', '10.40', '42.5万'], ['五', '10.39', '6.5万']]
  .map(([a, b, c]) => `<tr><td class="leading-[25px]"><span class="pl-[2px]">买${a}</span></td><td class="w-24 text-right leading-[25px]" style="color:${C.r}">${num(b)}</td><td class="w-[168px] text-right leading-[25px]" style="color:${C.y}"><span class="pr-[6px]">${num(c)}</span></td></tr>`).join('');
const q = rows => rows.map(([a, b, bc, c, d, dc]) => `<tr><td class="w-20 leading-[26px] whitespace-nowrap"><span class="pl-[2px]">${a}</span></td><td class="w-[82px] text-right leading-[26px]" style="color:${C[bc]}">${num(b)}</td><td class="leading-[26px]"><span class="pl-[6px]">${c}</span></td><td class="w-24 text-right leading-[26px]" style="color:${C[dc]}"><span class="pr-1">${num(d)}</span></td></tr>`).join('');
el('q1').innerHTML = q([['涨停', '10.43', 'r', '跌停', '8.53', 'g'], ['最高', '10.43', 'r', '量比', '6.16', 'p'], ['最低', '10.28', 'r', '市值', '56.7亿', 'w'], ['现量', '944', 'p', '总量', '306215', 'w'], ['外盘', '25530', 'r', '内盘', '280685', 'g']]);
el('q1').rows[1].cells[1].firstChild.classList.add('outline', 'outline-offset-2', 'outline-[#333]');
el('q2').innerHTML = q([['换手', '7.58%', 'w', '股本', '5.44亿', 'w'], ['净资', '6.14', 'w', '流通', '4.04亿', 'w'], ['收益㈡', '0.110', 'w', '<b class="text-xl leading-none font-medium">PE(</b>动<b class="text-xl leading-none font-medium">)</b>', '48.1', 'w']]);
el('ticks').innerHTML = '14:53 11.2 3|14:53 1.0 1|14:54 102.2 8|14:54 31.3 1|14:54 0.5 1|14:54 417.4 62|14:54 5.5 2|14:54 3.1 3|14:55 0.1 1|14:55 0.3 1|14:55 3.1 2|14:55 0.5 1|14:55 0.9 1|14:55 0.5 1|14:55 0.1 1|14:56 0.3 1|14:56 1.4 1|14:56 2.1 1|14:56 21.8 8|14:56 0.3 1|14:56 0.1 1|14:56 0.2 1|15:00 98.5 40'.split('|').map(t => {
  const [a, b, c] = t.split(' '), big = +b > 90;
  return `<tr><td><span class="pl-[2px]">${a}</span></td><td class="text-right" style="color:${C.r}">10.43</td><td class="text-right" style="color:${big ? C.p : C.y}">${num(b + '万')}</td><td class="text-center" style="color:${C.g}">${a === '15:00' ? '' : 'S'}</td><td class="text-right" style="color:${C.d}"><span class="pr-1">${c}</span></td></tr>`;
}).join('');

// Right-hand tool strip
const ic = b => `<svg width="24" height="24" viewBox="0 0 24 24">${b}</svg>`;
const box = b => ic('<rect x="1.500" y="2.500" width="21" height="19" fill="#fff" stroke="#5a90f0" stroke-width="1.600"/>' + b);
const lab = (t, c = '#2440d0') => box(`<text x="12" y="17" text-anchor="middle" font-size="${t.length > 2 ? 12 : 14}" font-weight="500" fill="${c}">${t}</text>`);
const tools = [
  ['后退', ic('<path d="M2 12l9-9v5h10v8H11v5z" fill="#fff" stroke="#3c7ae8" stroke-width="1.700"/>')],
  ['上移', ic('<path d="M12 2l8 9h-4v11H8V11H4z" fill="#fff" stroke="#3c7ae8" stroke-width="1.700"/>')],
  ['下移', ic('<path d="M12 22l8-9h-4V2H8v11H4z" fill="#fff" stroke="#3c7ae8" stroke-width="1.700"/>')],
  ['报价', box('<path d="M4 6h7M4 10h7M4 14h7" stroke="#20a040" stroke-width="2"/><path d="M13 6h8M13 10h8" stroke="#e03030" stroke-width="2"/><circle cx="16" cy="16" r="4" fill="#ddd" stroke="#666"/><path d="M14 16l2 2 4-5" stroke="#444" fill="none"/>')],
  ['列表', box('<path d="M6 5v14" stroke="#e04040" stroke-width="4" stroke-dasharray="2 1"/><path d="M12 5v14" stroke="#30a030" stroke-width="4" stroke-dasharray="2 1"/><path d="M18 5v14" stroke="#4050f0" stroke-width="4" stroke-dasharray="2 1"/>')],
  ['走势', box('<path d="M3 17l6-5 3 2 9-8" fill="none" stroke="#e02020" stroke-width="1.800"/>')],
  ['K线', box('<path d="M6 7v11M12 5v13M18 3v11" stroke="#444"/><path d="M4 9h4v6H4zM16 5h4v6h-4z" fill="#e01010"/><path d="M10 8h4v7h-4z" fill="#10902c"/>')],
  ['多窗', ic('<path d="M6 7V3h16v14h-3M2 7h17v14H2z" fill="#fff" stroke="#5a90f0" stroke-width="1.500"/><path d="M5 11h5M12 11h5M5 14h5M12 14h5M5 17h5M12 17h5" stroke="#555" stroke-width="1.500"/>')],
  ['F10', lab('F10')],
  ['板块', box('<path d="M5 5h6v5H5zM13 8h7v4h-7zM13 14h7v5h-7z" fill="#ffe080" stroke="#d89020"/><path d="M8 10v7h5M8 12h5" fill="none" stroke="#4080e0"/>')],
  ['自选', box('<path d="M7 7h10v12H7zM7 11h10M7 15h10M12 4v3" fill="none" stroke="#f07028" stroke-width="2.200"/>')],
  ['F12', lab('F12')],
  ['公式', ic('<rect x="1.500" y="2.500" width="21" height="19" rx="5" fill="#fff" stroke="#3a9a9a" stroke-width="1.800"/><text x="12" y="17" text-anchor="middle" font-size="13" font-style="italic" fill="#2a50b8">f(x)</text>')],
  ['圆', box('<circle cx="12" cy="12" r="4.500" fill="none" stroke="#2a70c8" stroke-width="1.700"/>')], 0,
  ['叠加', box('<path d="M3 10l4-3 4 3 4-3 6 2" fill="none" stroke="#e03030" stroke-width="1.500"/><path d="M3 17l4-3 4 3 4-4 6 2" fill="none" stroke="#3050e0" stroke-width="1.500"/>')],
  ['RSI', '<span class="text-[14px] font-bold text-[#2c40d8]">RSI</span>'],
  ['资金', ic('<path d="M12 1l5 4H7z" fill="#c02828"/><text x="12" y="22" text-anchor="middle" font-size="20" font-weight="bold" fill="#c02828" stroke="#777" stroke-width=".5">S</text>')],
  ['移动', ic('<path d="M12 1l5 6H7zM12 23l5-6H7zM1 12l6-5v10zM23 12l-6-5v10zM9 9h6v6H9z" fill="#1c50c8"/>')],
  ['画笔', ic('<path d="M2 22l3-7L17 3l5 4L9 19z" fill="#f0a030" stroke="#805020"/><path d="M17 3l5 4-3 3-5-4z" fill="#d06060"/><path d="M2 22l2-4 2 2z" fill="#222"/>')], 0,
  ['F5', lab('F5')],
  ['刷新', box('<path d="M5 11c1-7 9-7 12-3l2-2v7h-7l2-2c-2-3-5-2-6 0z" fill="#58c038"/><path d="M19 13c-1 7-9 7-12 3l-2 2v-5h6l-1 2c2 2 5 1 6-2z" fill="#38a028"/>')],
  ...['1', '5', '15', '30', '60', '日', '周', '月', 'N', '多', '季', '年'].map(t => [t, t])];
el('tools').innerHTML = tools.map((t, i) => t === 0 ? '<hr class="my-[5px] w-7 border-[#999]">'
  : `<button aria-label="${t[0]}" class="flex ${i ? 'h-8' : 'h-[30px]'} w-full shrink-0 items-center justify-center ${t[0] === '日' ? 'border-t border-l border-[#aaa] bg-white' : ''}">${t[1]}</button>`).join('');
</script>
</body>
</html>
